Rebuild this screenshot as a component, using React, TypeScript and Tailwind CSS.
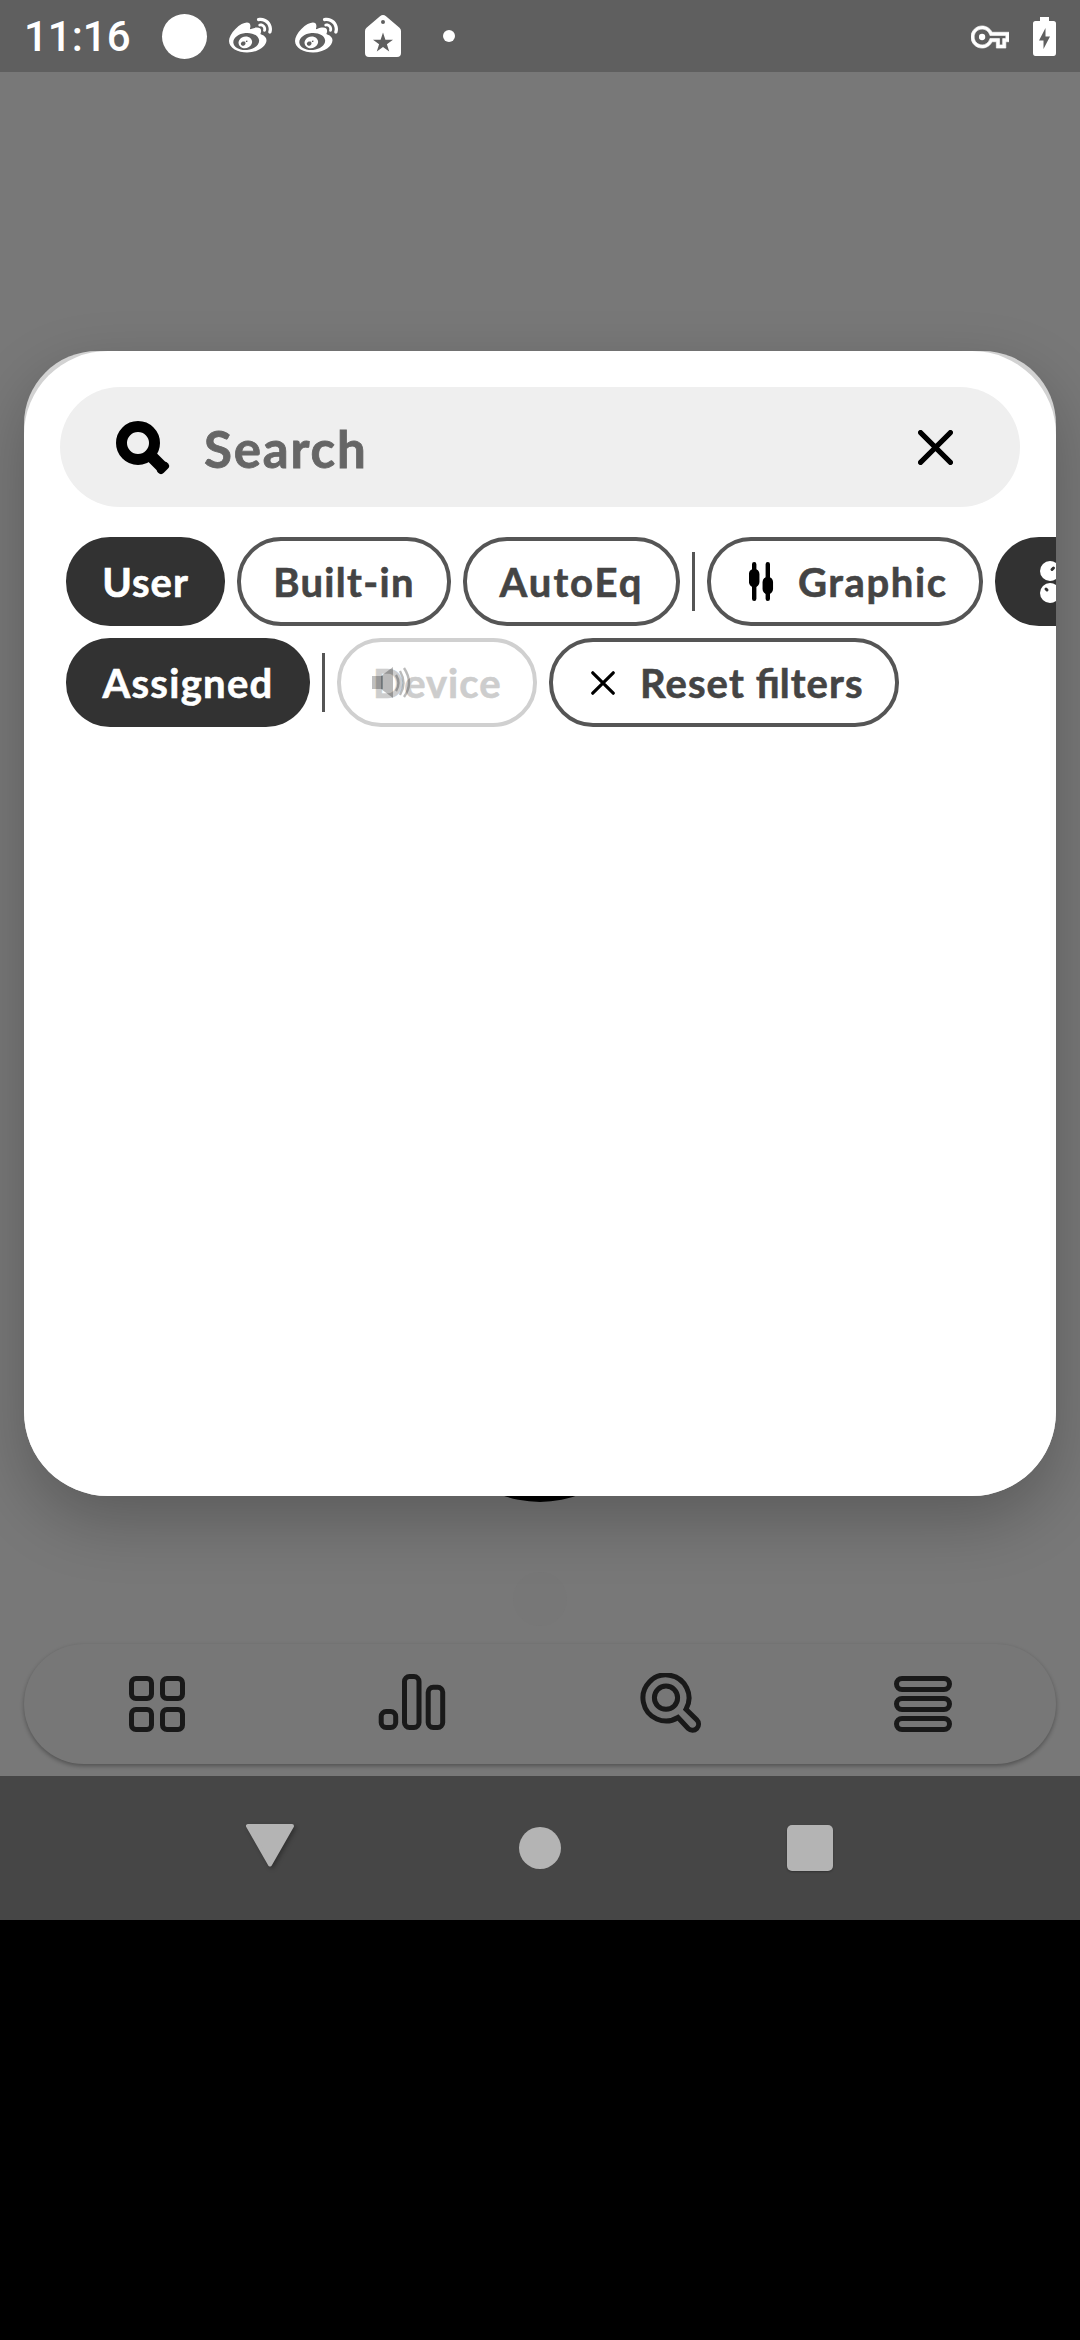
import type { ReactNode } from "react";
import { FaWeibo } from "react-icons/fa";

function StatusBar() {
  return (
    <header className="flex h-[72px] w-full shrink-0 items-center bg-[#5f5f5f] pl-6 pr-6 text-white">
      <span className="mt-[2px] w-[138px] font-[Roboto] text-[42px] font-medium leading-none">11:16</span>
      <span className="size-[45px] shrink-0 rounded-full bg-white" />
      <FaWeibo className="ml-[22px] size-[43px] shrink-0" />
      <FaWeibo className="ml-[23px] size-[43px] shrink-0" />
      <svg className="ml-[27px] h-[42px] w-[36px] shrink-0" viewBox="0 0 36 42">
        <path
          fill="#fff"
          fillRule="evenodd"
          d="M15 1.2Q18-1 21 1.2L34.5 12.8Q36 14 36 16V38Q36 42 32 42H4Q0 42 0 38V16Q0 14 1.500 12.800ZM18 5a2 2 0 1 0 0 4a2 2 0 1 0 0-4ZM18 17.500L20.400 24.700H28L21.900 29.200L24.200 36.500L18 32L11.800 36.500L14.100 29.200L8 24.700H15.600Z"
        />
      </svg>
      <span className="ml-[42px] size-[12px] shrink-0 rounded-full bg-white" />
      <svg className="ml-auto mt-[2px] h-[38px] w-[38px] shrink-0" viewBox="0 0 24 24" fill="#fff">
        <path
          stroke="#fff"
          strokeWidth=".4"
          d="M22 19h-6v-4h-2.680c-1.140 2.420-3.600 4-6.320 4-3.860 0-7-3.140-7-7s3.140-7 7-7c2.720 0 5.170 1.580 6.320 4H24v6h-2v4zm-4-2h2v-4h2v-2H11.940l-.23-.67C11.010 8.340 9.110 7 7 7c-2.760 0-5 2.240-5 5s2.240 5 5 5c2.110 0 4.010-1.340 4.710-3.330l.23-.67H18v4z"
        />
        <circle cx="7" cy="12" r="2" />
      </svg>
      <svg className="ml-6 h-[39px] w-[23px] shrink-0" viewBox="0 0 23 39">
        <path
          fill="#fff"
          fillRule="evenodd"
          d="M7 0H16V4H20.500Q23 4 23 6.500V36Q23 39 20.500 39H2.500Q0 39 0 36V6.500Q0 4 2.500 4H7ZM12.500 11L6 23.500H10.500V32L17 19.500H12.500Z"
        />
      </svg>
    </header>
  );
}

function CrossIcon({ className, stroke }: { className: string; stroke: number }) {
  return (
    <svg className={className} viewBox="0 0 34 34" fill="none" stroke="#000" strokeWidth={stroke} strokeLinecap="round">
      <path d="M2.500 2.500L31.500 31.500M31.500 2.500L2.500 31.500" />
    </svg>
  );
}

function SearchField() {
  return (
    <div className="mx-9 mt-9 flex h-[120px] shrink-0 items-center rounded-full bg-[#efefef] pl-[56px] pr-[67px]">
      <svg className="mt-[2px] h-[54px] w-[54px] shrink-0" viewBox="0 0 54 54" fill="none" stroke="#000">
        <circle cx="22" cy="22" r="16.500" strokeWidth="11" />
        <path d="M35 35L46 46" strokeWidth="12" />
        <path d="M45 49L49 45" strokeWidth="8" strokeLinecap="round" />
      </svg>
      <span className="ml-[34px] mt-[2px] text-[51px] font-bold leading-none tracking-[1.800px] text-[#666] [-webkit-text-stroke:0.8px_#666]">
        Search
      </span>
      <CrossIcon className="ml-auto size-[35px] shrink-0" stroke={5} />
    </div>
  );
}

function Chip({ className, children }: { className: string; children: ReactNode }) {
  return (
    <div
      className={`flex h-[89px] shrink-0 items-center whitespace-nowrap rounded-[44px] text-[40px] font-bold leading-none [-webkit-text-stroke:0.6px_currentColor] ${className}`}
    >
      {children}
    </div>
  );
}

const filled = "bg-[#323232] text-white";
const outlined = "border-4 border-[#555] text-[#444]";

function Divider() {
  return <span className="h-[59px] w-[3px] shrink-0 bg-[#555]" />;
}

function Filters() {
  return (
    <div className="mt-[30px] flex flex-col gap-3 overflow-hidden pl-[42px]">
      <div className="flex items-center gap-3">
        <Chip className={`w-[159px] justify-center tracking-[1px] ${filled}`}>User</Chip>
        <Chip className={`w-[214px] justify-center tracking-[1.300px] ${outlined}`}>Built-in</Chip>
        <Chip className={`w-[217px] justify-center tracking-[2px] ${outlined}`}>AutoEq</Chip>
        <Divider />
        <Chip className={`w-[276px] pl-[38px] tracking-[1.600px] ${outlined}`}>
          <svg className="mr-[24px] h-[39px] w-[25px] shrink-0" viewBox="0 0 25 39">
            <g fill="none" stroke="#000" strokeLinecap="round">
              <path d="M5.200 2.200V36.800M18.800 2.200V36.800" strokeWidth="4.400" />
              <path d="M5.200 12V20M18.800 20V27" strokeWidth="10.500" />
            </g>
          </svg>
          Graphic
        </Chip>
        <Chip className={`w-[276px] pl-[45px] ${filled}`}>
          <svg className="h-[44px] w-[42px] shrink-0" viewBox="0 0 42 44">
            <g fill="#fff">
              <circle cx="10" cy="11" r="10" />
              <circle cx="10" cy="33" r="10" />
              <circle cx="32" cy="11" r="10" />
              <circle cx="32" cy="33" r="10" />
            </g>
            <path d="M12 9.500L13.500 8M6 29L7 30" stroke="#323232" strokeWidth="3" strokeLinecap="round" />
          </svg>
        </Chip>
      </div>
      <div className="flex items-center gap-3">
        <Chip className={`w-[244px] justify-center tracking-[1.300px] ${filled}`}>Assigned</Chip>
        <Divider />
        <Chip className="relative w-[200px] border-4 border-[#d0d0d0] pl-[32px] tracking-[1px] text-[#cdcdcd]">
          Device
          <svg className="absolute left-[31px] top-[24px] h-[34px] w-[40px]" viewBox="0 0 40 34">
            <path d="M0 10H11V23H0Z" fill="#000" fillOpacity=".25" />
            <path d="M9 10L21 1V32L9 23Z" fill="#000" fillOpacity=".27" />
            <g fill="none" stroke="#000" strokeOpacity=".27" strokeWidth="2.400">
              <path d="M24 9Q29 17 24 25M28 5Q35 17 28 29M32 2Q42 17 32 31" />
            </g>
          </svg>
        </Chip>
        <Chip className={`w-[350px] pl-[38px] tracking-[1.100px] ${outlined}`}>
          <CrossIcon className="mr-[25px] size-[24px] shrink-0" stroke={4.5} />
          <span>
            Reset <span className="tracking-normal">fi</span>lters
          </span>
        </Chip>
      </div>
    </div>
  );
}

function SearchDialog() {
  return (
    <section className="absolute left-6 top-[279px] h-[1145px] w-[1032px] rounded-b-[84px] rounded-t-[73px] bg-[#d2d2d2] shadow-[0_24px_64px_rgba(0,0,0,0.24)]">
      <div className="flex h-full flex-col overflow-hidden rounded-[84px] bg-white">
        <SearchField />
        <Filters />
      </div>
    </section>
  );
}

function TabBar() {
  return (
    <nav className="mx-6 mb-3 mt-auto flex h-[120px] items-center rounded-full bg-[#777] shadow-[0_2px_4px_rgba(0,0,0,0.32)]">
      <svg className="ml-[105px] size-[58px]" viewBox="0 0 58 58" fill="none" stroke="#191919" strokeWidth="5">
        <rect x="2.500" y="3.500" width="20" height="20" rx="4.500" />
        <rect x="33.500" y="3.500" width="20" height="20" rx="4.500" />
        <rect x="2.500" y="34.500" width="20" height="20" rx="4.500" />
        <rect x="33.500" y="34.500" width="20" height="20" rx="4.500" />
      </svg>
      <svg className="ml-[191px] h-[60px] w-[68px]" viewBox="0 0 68 60" fill="none" stroke="#191919" strokeWidth="5">
        <rect x="3.200" y="37.500" width="14.500" height="16" rx="5" />
        <rect x="26.500" y="2.500" width="14.500" height="51" rx="5" />
        <rect x="50.200" y="13.200" width="14.500" height="40.300" rx="5" />
      </svg>
      <svg className="ml-[194px] size-[62px]" viewBox="0 0 62 62" fill="none" stroke="#191919" strokeWidth="5">
        <circle cx="26" cy="24.700" r="11.600" />
        <path d="M38 44.500A23 23 0 1 1 46 36.200L56.700 46.800A6 6 0 0 1 48.200 55.500Z" strokeLinejoin="miter" />
      </svg>
      <svg className="ml-[190px] size-[60px]" viewBox="0 0 60 60" fill="none" stroke="#191919" strokeWidth="5">
        <rect x="4.500" y="4.500" width="53" height="11" rx="5.500" />
        <rect x="4.500" y="24.500" width="53" height="11" rx="5.500" />
        <rect x="4.500" y="44.500" width="53" height="11" rx="5.500" />
      </svg>
    </nav>
  );
}

function SystemNav() {
  return (
    <footer className="flex h-[144px] w-full shrink-0 items-center bg-[#464646]">
      <svg className="ml-[244px] h-[56px] w-[56px] drop-shadow-[2px_2px_2px_rgba(0,0,0,0.3)]" viewBox="0 0 56 56">
        <path d="M4 6H48L26 44.500Z" fill="#b4b4b4" stroke="#b4b4b4" strokeWidth="4" strokeLinejoin="round" />
      </svg>
      <span className="ml-[219px] size-[42px] rounded-full bg-[#b4b4b4]" />
      <span className="ml-[226px] size-[46px] rounded-[5px] bg-[#b4b4b4] shadow-[0_1px_2px_rgba(0,0,0,0.3)]" />
    </footer>
  );
}

export default function App() {
  return (
    <div className="flex h-[2340px] w-[1080px] flex-col overflow-hidden bg-black font-[Lato,sans-serif]">
      <StatusBar />
      <main className="relative flex h-[1704px] shrink-0 flex-col overflow-hidden bg-[#787878]">
        <span className="absolute left-[429px] top-[1208px] size-[222px] rounded-full bg-black" />
        <span className="absolute left-[513px] top-[1500px] size-[54px] rounded-full bg-[#777]" />
        <TabBar />
        <SearchDialog />
      </main>
      <SystemNav />
    </div>
  );
}
